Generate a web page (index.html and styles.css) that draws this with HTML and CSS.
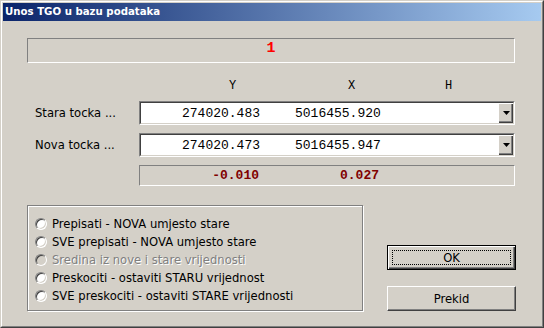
FILE: index.html
```html
<!DOCTYPE html>
<html>
<head>
    <title>Unos TGO u bazu podataka</title>
    <link rel="stylesheet" href="styles.css">
</head>
<body>
    <div class="window">
        <div class="window-inner">
            <div class="titlebar">Unos TGO u bazu podataka</div>
            <div class="content">
                <div class="counter">1</div>

                <div class="headers">
                    <span class="hdr-y">Y</span>
                    <span class="hdr-x">X</span>
                    <span class="hdr-h">H</span>
                </div>

                <div class="row">
                    <div class="label">Stara tocka ...</div>
                    <div class="combo">
                        <div class="combo-text">
                            <span class="val-y">274020.483</span>
                            <span class="val-x">5016455.920</span>
                        </div>
                        <div class="combo-btn">
                            <svg width="7" height="4" viewBox="0 0 7 4"><path d="M0 0h7L3.5 4z" fill="#000"/></svg>
                        </div>
                    </div>
                </div>

                <div class="row">
                    <div class="label">Nova tocka ...</div>
                    <div class="combo">
                        <div class="combo-text">
                            <span class="val-y">274020.473</span>
                            <span class="val-x">5016455.947</span>
                        </div>
                        <div class="combo-btn">
                            <svg width="7" height="4" viewBox="0 0 7 4"><path d="M0 0h7L3.5 4z" fill="#000"/></svg>
                        </div>
                    </div>
                </div>

                <div class="row">
                    <div class="label"></div>
                    <div class="diff">
                        <span class="diff-y">-0.010</span>
                        <span class="diff-x">0.027</span>
                    </div>
                </div>

                <div class="bottom">
                    <div class="options">
                        <div class="option"><span class="radio"></span>Prepisati - NOVA umjesto stare</div>
                        <div class="option"><span class="radio"></span>SVE prepisati - NOVA umjesto stare</div>
                        <div class="option disabled"><span class="radio"></span>Sredina iz nove i stare vrijednosti</div>
                        <div class="option"><span class="radio"></span>Preskociti - ostaviti STARU vrijednost</div>
                        <div class="option"><span class="radio"></span>SVE preskociti - ostaviti STARE vrijednosti</div>
                    </div>
                    <div class="buttons">
                        <div class="btn default"><span class="focus">OK</span></div>
                        <div class="btn">Prekid</div>
                    </div>
                </div>
            </div>
        </div>
    </div>
</body>
</html>
```

FILE: styles.css
```css
body {
    margin: 0;
    background: #d4d0c8;
    font-family: 'DejaVu Sans', Verdana, sans-serif;
    font-size: 11.6px;
    color: #000;
}

.window {
    width: 544px;
    height: 328px;
    box-sizing: border-box;
    border: 1px solid;
    border-color: #d4d0c8 #404040 #404040 #d4d0c8;
    background: #d4d0c8;
}

.window-inner {
    height: 100%;
    box-sizing: border-box;
    border: 1px solid;
    border-color: #fff #808080 #808080 #fff;
    padding: 1px;
    display: flex;
    flex-direction: column;
}

.titlebar {
    height: 18px;
    line-height: 18px;
    padding-left: 2px;
    background: linear-gradient(to right, #0a246a, #a6caf0);
    color: #fff;
    font-weight: bold;
    font-size: 10.2px;
}

.content {
    flex: 1;
    padding: 17px 26px 0 24px;
    display: flex;
    flex-direction: column;
}

/* sunken static with the record counter */
.counter {
    height: 25px;
    box-sizing: border-box;
    border: 1px solid;
    border-color: #808080 #fff #fff #808080;
    text-align: center;
    font-family: 'Liberation Mono', 'Courier New', monospace;
    font-weight: bold;
    font-size: 15px;
    line-height: 19px;
    color: #ff0000;
}

.headers {
    position: relative;
    height: 14px;
    margin-top: 16px;
    font-family: 'Liberation Mono', 'Courier New', monospace;
    font-size: 12px;
    line-height: 14px;
}

.headers span {
    position: absolute;
    top: 0;
}

.hdr-y { left: 202px; }
.hdr-x { left: 321px; }
.hdr-h { left: 418px; }

.row {
    display: flex;
    margin-top: 8px;
}

.label {
    width: 112px;
    padding-left: 8px;
    box-sizing: border-box;
    line-height: 24px;
}

.combo {
    flex: 1;
    height: 24px;
    box-sizing: border-box;
    border: 1px solid;
    border-color: #808080 #fff #fff #808080;
    display: flex;
}

.combo-text {
    flex: 1;
    background: #fff;
    border: 1px solid;
    border-color: #404040 #d4d0c8 #d4d0c8 #404040;
    border-right: none;
    display: flex;
    align-items: center;
    font-family: 'Liberation Mono', 'Courier New', monospace;
    font-size: 13px;
}

.val-y {
    width: 119px;
    text-align: right;
}

.val-x {
    margin-left: 35px;
}

.combo-btn {
    width: 16px;
    box-sizing: border-box;
    border-top: 1px solid #404040;
    border-bottom: 1px solid #d4d0c8;
    border-right: 1px solid #d4d0c8;
    background: #d4d0c8;
    box-shadow: inset 1px 1px #fff, inset -1px -1px #404040, inset -2px -2px #808080;
    display: flex;
    align-items: center;
    justify-content: center;
}

.combo-btn svg {
    display: block;
    margin-left: 1px;
}

.diff {
    flex: 1;
    height: 21px;
    box-sizing: border-box;
    border: 1px solid;
    border-color: #808080 #fff #fff #808080;
    display: flex;
    align-items: center;
    font-family: 'Liberation Mono', 'Courier New', monospace;
    font-size: 13px;
    font-weight: bold;
    color: #800000;
}

.diff-y {
    width: 119px;
    text-align: right;
}

.diff-x {
    margin-left: 81px;
}

.bottom {
    display: flex;
    justify-content: space-between;
    align-items: flex-end;
    margin-top: 19px;
}

/* etched group box */
.options {
    width: 336px;
    height: 106px;
    box-sizing: border-box;
    border: 1px solid #808080;
    box-shadow: 1px 1px 0 #fff, inset 1px 1px 0 #fff;
    padding: 9px 0 0 7px;
}

.option {
    display: flex;
    align-items: center;
    height: 18px;
}

.radio {
    width: 12px;
    height: 12px;
    box-sizing: border-box;
    border-radius: 50%;
    border: 1px solid;
    border-color: #808080 #fff #fff #808080;
    background: #fff;
    box-shadow: inset 1px 1px #404040, inset -1px -1px #d4d0c8;
    margin-right: 5px;
}

.option.disabled {
    color: #808080;
    text-shadow: 1px 1px #fff;
}

.option.disabled .radio {
    background: #d4d0c8;
}

.buttons {
    display: flex;
    flex-direction: column;
    gap: 16px;
    margin-right: -1px;
}

.btn {
    width: 129px;
    height: 25px;
    box-sizing: border-box;
    border: 1px solid;
    border-color: #fff #404040 #404040 #fff;
    box-shadow: inset -1px -1px #808080;
    display: flex;
    align-items: center;
    justify-content: center;
}

.btn.default {
    border: 1px solid #000;
    box-shadow: inset 1px 1px #fff, inset -1px -1px #404040, inset -2px -2px #808080;
    padding: 4px;
}

.focus {
    flex: 1;
    align-self: stretch;
    border: 1px dotted #000;
    display: flex;
    align-items: center;
    justify-content: center;
}
```
